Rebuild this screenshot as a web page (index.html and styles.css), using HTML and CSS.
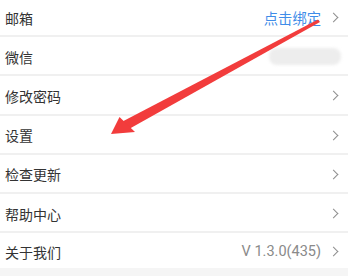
FILE: index.html
```html
<!DOCTYPE html>
<html lang="zh-CN">
<head>
    <meta charset="UTF-8">
    <meta name="viewport" content="width=device-width, initial-scale=1.0">
    <title>账号设置</title>
    <link rel="stylesheet" href="styles.css">
</head>
<body>
    <div class="page">
        <ul class="menu">
            <li class="menu-item">
                <span class="label">邮箱</span>
                <span class="value link">点击绑定</span>
                <span class="chevron"></span>
            </li>
            <li class="menu-item">
                <span class="label">微信</span>
                <span class="blurred"></span>
            </li>
            <li class="menu-item">
                <span class="label">修改密码</span>
                <span class="chevron"></span>
            </li>
            <li class="menu-item">
                <span class="label">设置</span>
                <span class="chevron"></span>
            </li>
            <li class="menu-item">
                <span class="label">检查更新</span>
                <span class="chevron"></span>
            </li>
            <li class="menu-item">
                <span class="label">帮助中心</span>
                <span class="chevron"></span>
            </li>
            <li class="menu-item last">
                <span class="label">关于我们</span>
                <span class="value version">V 1.3.0(435)</span>
                <span class="chevron"></span>
            </li>
        </ul>

        <!-- annotation arrow drawn over the list -->
        <svg class="arrow" width="348" height="276" viewBox="0 0 348 276">
            <polygon points="318,19.5 320,22 129,129 122.5,121.5" fill="#f23c3c"></polygon>
            <polygon points="111,134 119.5,117 135,132" fill="#f23c3c"></polygon>
        </svg>
    </div>
</body>
</html>
```

FILE: styles.css
```css
body {
    margin: 0;
    background-color: #f5f5f5;
    font-family: "Noto Sans CJK SC", "Noto Sans", sans-serif;
}

.page {
    position: relative;
    width: 348px;
    height: 276px;
    overflow: hidden;
}

.menu {
    list-style: none;
    margin: -2px 0 0;
    padding: 0;
    background-color: #fff;
}

.menu-item {
    display: flex;
    align-items: center;
    box-sizing: border-box;
    height: 39.2px;
    padding: 2px 10px 0 5px;
    border-bottom: 2px solid #f0f0f0;
    font-size: 14px;
    color: #333;
}

.menu-item.last {
    height: 35px;
    border-bottom: none;
}

.label {
    flex: 1;
}

.value {
    margin-right: 9px;
}

.link {
    font-size: 14.3px;
    color: #3f8ce8;
}

.version {
    font-family: Roboto, "Noto Sans", sans-serif;
    font-size: 14.5px;
    color: #8a8a8a;
}

.chevron {
    width: 6px;
    height: 6px;
    margin-right: 1px;
    border-top: 1.3px solid #8e8e8e;
    border-right: 1.3px solid #8e8e8e;
    transform: rotate(45deg);
}

.blurred {
    width: 72px;
    height: 17px;
    margin-right: -3px;
    border-radius: 8px;
    background-color: #ededed;
    filter: blur(1.5px);
}

.arrow {
    position: absolute;
    top: 0;
    left: 0;
    pointer-events: none;
}
```
